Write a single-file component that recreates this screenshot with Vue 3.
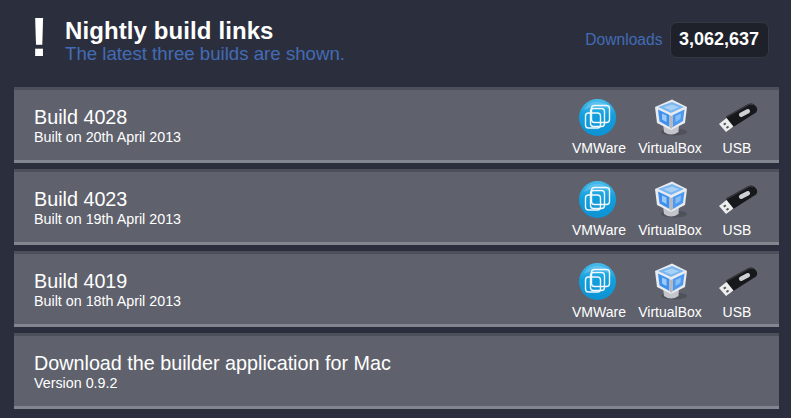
<script setup>
const builds = [
  { name: "Build 4028", date: "Built on 20th April 2013" },
  { name: "Build 4023", date: "Built on 19th April 2013" },
  { name: "Build 4019", date: "Built on 18th April 2013" },
];
</script>

<template>
  <div class="page">
    <header class="top">
      <div class="bang">!</div>
      <div class="heading">
        <h1>Nightly build links</h1>
        <p>The latest three builds are shown.</p>
      </div>
      <div class="downloads">
        <span>Downloads</span>
        <b>3,062,637</b>
      </div>
    </header>

    <div v-for="b in builds" :key="b.name" class="row">
      <div class="info">
        <h2>{{ b.name }}</h2>
        <p>{{ b.date }}</p>
      </div>
      <div class="links">
        <a class="link vm">
          <svg width="44" height="44" viewBox="1.5 0 44 44">
            <defs>
              <linearGradient id="vmBlue" x1="0" y1="0" x2="0" y2="1">
                <stop offset="0" stop-color="#45bcec" />
                <stop offset="0.45" stop-color="#129fde" />
                <stop offset="1" stop-color="#0e92d2" />
              </linearGradient>
            </defs>
            <circle cx="22" cy="22.5" r="18.5" fill="url(#vmBlue)" />
            <path d="M8 15 A16 16 0 0 1 36 15 Q22 8 8 15 Z" fill="#fff" opacity="0.18" />
            <g fill="none" stroke="#f2f8fc" stroke-width="1.4">
              <rect x="16" y="10.5" width="18" height="17" rx="3" />
              <rect x="15" y="13.5" width="14" height="18" rx="3" />
              <rect x="10" y="18" width="15" height="15" rx="3" />
            </g>
          </svg>
          <span>VMWare</span>
        </a>
        <a class="link vb">
          <svg width="40" height="44" viewBox="0 0 40 44">
            <ellipse cx="24" cy="37" rx="13" ry="3.5" fill="#4f515b" />
            <path d="M13 28 L21 34 L29 28 L28.5 37 Q21 42 14 37 Z" fill="#c3c5ca" />
            <path d="M22 4.5 L37 12 L35 28 L21 35 L7 28 L5 12 Z" fill="#e9ebef" />
            <path d="M22 7 L34 12 L21 18 L8 12 Z" fill="#7ab6ef" />
            <path d="M22 9.5 L29 12.2 L21 15.5 L13.5 12.2 Z" fill="#a9d1f6" />
            <path d="M8 14.5 L19.5 20 L19.5 32 L9.5 26.5 Z" fill="#3f90ee" />
            <path d="M34.5 14.5 L23 20 L23 32 L33 26 Z" fill="#4b9af0" />
            <path d="M12 18.5 L16.5 20.5 L16.5 27 L12 24.5 Z" fill="#9ccbf8" />
            <path d="M25.5 21 L31 18.5 L30.5 24 L25.5 27 Z" fill="#86bdf6" />
            <path d="M19.5 20 L21 21 L23 20 L23 32 L21 34 L19.5 32 Z" fill="#b4b7bd" />
          </svg>
          <span>VirtualBox</span>
        </a>
        <a class="link usb">
          <svg width="46" height="36" viewBox="-2 0 46 36">
            <path d="M10 17.5 L32 5.2 Q35 3.8 37.5 5 L40.5 8 Q42 11 40 13.5 L16.5 28.5 Z" fill="#17181b" />
            <path d="M10.5 18 L32.5 5.8 Q35 4.6 37.5 6" stroke="#3a3c42" stroke-width="1.2" fill="none" />
            <rect x="-6" y="-2.2" width="12" height="4.4" rx="2.2" transform="translate(28.5 14) rotate(-28)" fill="#cfd0d4" />
            <path d="M3 25 L10.5 19 L17.5 27.5 L10 33 Z" fill="#eeeeef" />
            <rect x="7.5" y="24" width="2.6" height="2" fill="#55565c" transform="rotate(-35 8.7 25)" />
            <rect x="10.2" y="27.2" width="2.6" height="2" fill="#55565c" transform="rotate(-35 11.5 28.2)" />
          </svg>
          <span>USB</span>
        </a>
      </div>
    </div>

    <div class="row">
      <div class="info">
        <h2>Download the builder application for Mac</h2>
        <p>Version 0.9.2</p>
      </div>
    </div>
  </div>
</template>

<style>
html, body {
  background: #2b2f3d;
}
</style>

<style scoped>
.page {
  width: 791px;
  height: 418px;
  overflow: hidden;
  padding: 0 12px 0 14px;
  box-sizing: border-box;
  background: #2b2f3d;
  font-family: "Liberation Sans", Arial, sans-serif;
  color: #fff;
}

.top {
  height: 87px;
  display: flex;
  align-items: flex-start;
}

.bang {
  width: 51px;
  flex: none;
  padding-left: 16px;
  box-sizing: border-box;
  margin-top: 7px;
  font-size: 55px;
  line-height: 60px;
  font-weight: bold;
}

.heading {
  padding-top: 18px;
}

h1 {
  margin: 0;
  font-size: 24px;
  line-height: 26px;
  font-weight: bold;
  letter-spacing: 0.1px;
}

.heading p {
  margin: 0;
  font-size: 18.67px;
  line-height: 20px;
  color: #436bb5;
}

.downloads {
  margin-top: 22px;
  margin-left: auto;
  padding-right: 10.5px;
  display: flex;
  align-items: center;
  gap: 7px;
  font-size: 15.6px;
  color: #436bb5;
}

.downloads b {
  width: 99px;
  height: 36px;
  line-height: 33px;
  text-align: center;
  box-sizing: border-box;
  border: 1px solid #353946;
  border-radius: 7px;
  background: #1e212a;
  color: #fff;
  font-size: 18px;
}

.row {
  height: 76px;
  margin-bottom: 6px;
  box-sizing: border-box;
  border-top: 3px solid #4d505b;
  border-bottom: 3px solid #83858f;
  background: #5f626d;
  display: flex;
  justify-content: space-between;
  align-items: flex-start;
}

.info {
  padding: 16px 0 0 20px;
}

h2 {
  margin: 0;
  font-size: 19.75px;
  line-height: 22px;
  font-weight: normal;
}

.info p {
  margin: 1px 0 0;
  font-size: 14.3px;
  line-height: 16px;
}

.links {
  display: flex;
  padding: 4px 12px 0 0;
}

.link {
  display: flex;
  flex-direction: column;
  align-items: center;
  font-size: 14px;
  line-height: 16px;
}

.link svg {
  display: block;
  margin: auto 0;
}

.link.vm,
.link.vb,
.link.usb {
  height: 62px;
  justify-content: space-between;
}

.link.vm {
  width: 68px;
}

.link.vb {
  width: 74px;
}

.link.usb {
  width: 60px;
}
</style>
